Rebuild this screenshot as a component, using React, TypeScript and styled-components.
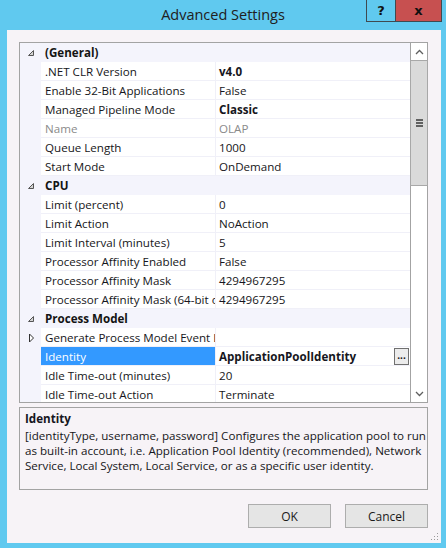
import React from "react"
import styled, { createGlobalStyle } from "styled-components"

const GlobalStyle = createGlobalStyle`
  html, body {
    margin: 0;
    padding: 0;
  }
  body {
    font-family: "Open Sans", "Noto Sans", sans-serif;
    color: #1a1a1a;
  }
  * {
    box-sizing: border-box;
  }
`

type Item = {
  label: string
  value: string
  bold?: boolean
  disabled?: boolean
  selected?: boolean
  browse?: boolean
  collapsed?: boolean
}

type Section = {
  name: string
  items: Item[]
}

const sections: Section[] = [
  {
    name: "(General)",
    items: [
      { label: ".NET CLR Version", value: "v4.0", bold: true },
      { label: "Enable 32-Bit Applications", value: "False" },
      { label: "Managed Pipeline Mode", value: "Classic", bold: true },
      { label: "Name", value: "OLAP", disabled: true },
      { label: "Queue Length", value: "1000" },
      { label: "Start Mode", value: "OnDemand" },
    ],
  },
  {
    name: "CPU",
    items: [
      { label: "Limit (percent)", value: "0" },
      { label: "Limit Action", value: "NoAction" },
      { label: "Limit Interval (minutes)", value: "5" },
      { label: "Processor Affinity Enabled", value: "False" },
      { label: "Processor Affinity Mask", value: "4294967295" },
      { label: "Processor Affinity Mask (64-bit option)", value: "4294967295" },
    ],
  },
  {
    name: "Process Model",
    items: [
      { label: "Generate Process Model Event Log Entry", value: "", collapsed: true },
      { label: "Identity", value: "ApplicationPoolIdentity", bold: true, selected: true, browse: true },
      { label: "Idle Time-out (minutes)", value: "20" },
      { label: "Idle Time-out Action", value: "Terminate" },
      { label: "Load User Profile", value: "False" },
    ],
  },
]

const Window = styled.div`
  width: 446px;
  height: 548px;
  background: #60c9ef;
  padding: 0 5px 5px 7px;
  display: flex;
  flex-direction: column;
  overflow: hidden;
`

const TitleBar = styled.header`
  height: 30px;
  margin: 0 -5px 0 -7px;
  display: grid;
  grid-template-columns: 1fr auto 1fr;
`

const Title = styled.h1`
  grid-column: 2;
  margin: 0;
  font-family: "Open Sans", "Noto Sans", sans-serif;
  font-weight: 400;
  font-size: 14.5px;
  line-height: 30px;
  color: #202020;
`

const CaptionButtons = styled.div`
  grid-column: 3;
  justify-self: end;
  align-self: start;
  display: flex;
  margin-right: 4px;
  border: 1px solid #3f4a50;
  border-top: 0;
`

const CaptionButton = styled.div<{ $close?: boolean }>`
  width: ${(p) => (p.$close ? 46 : 28)}px;
  height: 21px;
  display: flex;
  align-items: center;
  justify-content: center;
  background: ${(p) => (p.$close ? "#c75050" : "transparent")};
  border-left: ${(p) => (p.$close ? "1px solid #3f4a50" : "0")};
  font-family: "DejaVu Sans", sans-serif;
  font-weight: 700;
  font-size: 13px;
  color: #111;
`

const Client = styled.main`
  position: relative;
  flex: 1;
  background: #f7f3f7;
  padding: 12px 13px 0 12px;
  display: flex;
  flex-direction: column;
`

const Grid = styled.div`
  height: 361px;
  border: 1px solid #a3a3a3;
  background: #ffffff;
  display: flex;
`

const Rows = styled.div`
  flex: 1;
  overflow: hidden;
  font-size: 11.6px;
`

const Row = styled.div`
  height: 19px;
  display: grid;
  grid-template-columns: 21px 174px 1fr;
`

const Gutter = styled.div`
  background: #f4f4fc;
  display: flex;
  align-items: center;
  justify-content: center;
  padding-left: 1px;
`

const CategoryName = styled.div`
  grid-column: 2 / 4;
  background: #f4f4fc;
  font-weight: 700;
  line-height: 20px;
  padding-left: 4px;
  color: #141414;
`

const Cell = styled.div<{ $selected?: boolean; $disabled?: boolean; $bold?: boolean; $value?: boolean }>`
  line-height: 19px;
  border-bottom: 1px solid #f0f0f8;
  border-left: ${(p) => (p.$value ? "1px solid #f0f0f8" : "0")};
  padding-left: ${(p) => (p.$value ? 3 : 4)}px;
  white-space: nowrap;
  overflow: hidden;
  display: flex;
  align-items: center;
  justify-content: space-between;
  background: ${(p) => (p.$selected ? "#3399ff" : "#ffffff")};
  color: ${(p) => (p.$selected ? "#ffffff" : p.$disabled ? "#8a8a8a" : "#161620")};
  font-weight: ${(p) => (p.$bold ? 700 : 400)};
`

const BrowseButton = styled.div`
  flex: none;
  width: 15px;
  height: 17px;
  margin-right: 1px;
  border: 1px solid #707070;
  background: #ececec;
  font-size: 10px;
  line-height: 13px;
  text-align: center;
  color: #111;
`

const ScrollBar = styled.div`
  width: 17px;
  border-left: 1px solid #a3a3a3;
  display: flex;
  flex-direction: column;
  background: #ffffff;
`

const ScrollArrow = styled.div`
  height: 17px;
  display: flex;
  align-items: center;
  justify-content: center;
`

const Thumb = styled.div`
  height: 126px;
  margin: 0 -1px;
  background: #dadada;
  border: 1px solid #a8a8a8;
  display: flex;
  flex-direction: column;
  align-items: center;
  justify-content: center;
  gap: 1px;
`

const GripLine = styled.span`
  width: 7px;
  height: 2px;
  background: #616161;
`

const Track = styled.div`
  flex: 1;
`

const Description = styled.section`
  margin-top: 4px;
  height: 83px;
  border: 1px solid #a3a3a3;
  padding: 3px 4px 0 5px;
  font-size: 11.6px;
  line-height: 15px;
  color: #161620;
  white-space: nowrap;
  overflow: hidden;
`

const DescriptionTitle = styled.div`
  font-weight: 700;
  margin-bottom: 2px;
`

const Footer = styled.footer`
  margin-top: 14px;
  display: flex;
  justify-content: flex-end;
  gap: 14px;
`

const Button = styled.button`
  width: 83px;
  height: 24px;
  border: 1px solid #adadad;
  background: #e5e5e5;
  font-family: "Open Sans", "Noto Sans", sans-serif;
  font-size: 12px;
  color: #1a1a1a;
  padding: 0;
`

const Grip = styled.svg`
  position: absolute;
  right: 2px;
  bottom: 2px;
`

function ExpandedGlyph() {
  return (
    <svg width="8" height="8" viewBox="0 0 8 8">
      <path d="M6.5 1.5 L6.5 6.5 L1.5 6.5 Z" fill="#d4d4d4" stroke="#555" strokeWidth="1" />
    </svg>
  )
}

function CollapsedGlyph() {
  return (
    <svg width="7" height="10" viewBox="0 0 7 10">
      <path d="M1.5 1 L5.5 5 L1.5 9 Z" fill="#fff" stroke="#333" strokeWidth="1" />
    </svg>
  )
}

function Chevron({ up }: { up?: boolean }) {
  return (
    <svg width="9" height="6" viewBox="0 0 9 6">
      <path
        d={up ? "M1 5 L4.5 1.5 L8 5" : "M1 1 L4.5 4.5 L8 1"}
        fill="none"
        stroke="#5f5f5f"
        strokeWidth="1.3"
      />
    </svg>
  )
}

export default function App() {
  return (
    <>
      <GlobalStyle />
      <Window>
        <TitleBar>
          <Title>Advanced Settings</Title>
          <CaptionButtons>
            <CaptionButton>?</CaptionButton>
            <CaptionButton $close>x</CaptionButton>
          </CaptionButtons>
        </TitleBar>
        <Client>
          <Grid>
            <Rows>
              {sections.map((section) => (
                <React.Fragment key={section.name}>
                  <Row>
                    <Gutter>
                      <ExpandedGlyph />
                    </Gutter>
                    <CategoryName>{section.name}</CategoryName>
                  </Row>
                  {section.items.map((item) => (
                    <Row key={item.label}>
                      <Gutter>{item.collapsed && <CollapsedGlyph />}</Gutter>
                      <Cell $selected={item.selected} $disabled={item.disabled}>
                        {item.label}
                      </Cell>
                      <Cell $value $bold={item.bold} $disabled={item.disabled}>
                        <span>{item.value}</span>
                        {item.browse && <BrowseButton>...</BrowseButton>}
                      </Cell>
                    </Row>
                  ))}
                </React.Fragment>
              ))}
            </Rows>
            <ScrollBar>
              <ScrollArrow>
                <Chevron up />
              </ScrollArrow>
              <Thumb>
                <GripLine />
                <GripLine />
                <GripLine />
              </Thumb>
              <Track />
              <ScrollArrow>
                <Chevron />
              </ScrollArrow>
            </ScrollBar>
          </Grid>
          <Description>
            <DescriptionTitle>Identity</DescriptionTitle>
            [identityType, username, password] Configures the application pool to run
            <br />
            as built-in account, i.e. Application Pool Identity (recommended), Network
            <br />
            Service, Local System, Local Service, or as a specific user identity.
          </Description>
          <Footer>
            <Button>OK</Button>
            <Button>Cancel</Button>
          </Footer>
          <Grip width="9" height="9" viewBox="0 0 9 9">
            {[
              [7, 1],
              [7, 4],
              [4, 4],
              [7, 7],
              [4, 7],
              [1, 7],
            ].map(([x, y]) => (
              <rect key={`${x}-${y}`} x={x} y={y} width="1" height="1" fill="#9a9a9a" />
            ))}
          </Grip>
        </Client>
      </Window>
    </>
  )
}
